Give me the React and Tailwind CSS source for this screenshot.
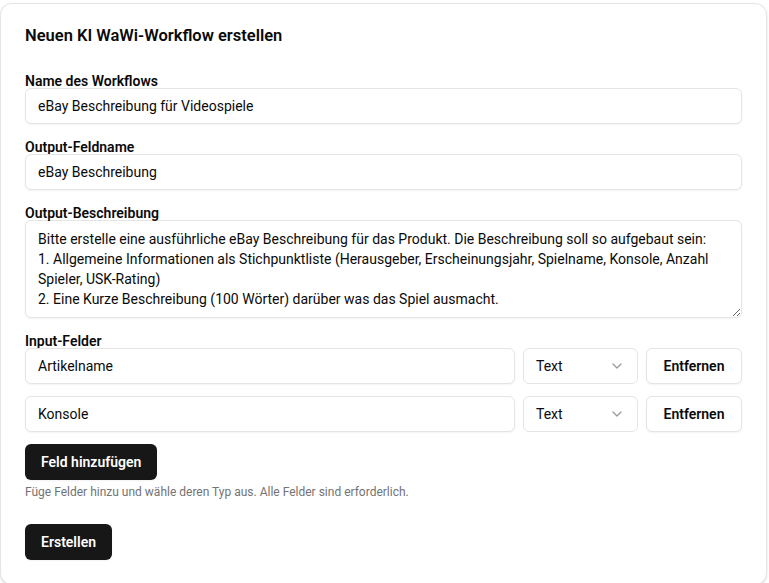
import React from "react";
import { ChevronDown } from "lucide-react";

const desc =
  "Bitte erstelle eine ausführliche eBay Beschreibung für das Produkt. Die Beschreibung soll so aufgebaut sein:\n1. Allgemeine Informationen als Stichpunktliste (Herausgeber, Erscheinungsjahr, Spielname, Konsole, Anzahl Spieler, USK-Rating)\n2. Eine Kurze Beschreibung (100 Wörter) darüber was das Spiel ausmacht.";

function Label({ children }) {
  return <label className="block text-sm font-semibold leading-none text-[#0a0a0a]">{children}</label>;
}

function TextInput({ value }) {
  return (
    <input
      defaultValue={value}
      className="h-9 w-full rounded-md border border-[#e5e5e5] bg-white px-3 text-sm text-[#0a0a0a] shadow-xs outline-none"
    />
  );
}

function FieldRow({ value }) {
  return (
    <div className="flex items-center gap-2">
      <div className="flex-1">
        <TextInput value={value} />
      </div>
      <div className="flex h-9 w-[115px] items-center justify-between rounded-md border border-[#e5e5e5] bg-white px-3 text-sm text-[#0a0a0a]">
        <span>Text</span>
        <ChevronDown size={16} className="text-[#0a0a0a] opacity-40" />
      </div>
      <button className="h-9 w-[96px] rounded-md border border-[#e5e5e5] bg-white text-sm font-semibold text-[#0a0a0a] shadow-xs">
        Entfernen
      </button>
    </div>
  );
}

export default function App() {
  return (
    <div className="min-h-[583px] bg-white pt-[3px] pl-0 pr-[2px] font-['Roboto',sans-serif]">
      <div className="rounded-xl border border-[#e5e5e5] bg-white px-6 pt-6 pb-6 shadow-sm">
        <h2 className="text-[16.5px] font-semibold leading-4 text-[#0a0a0a]">Neuen KI WaWi-Workflow erstellen</h2>
        <div className="mt-[30px] flex flex-col gap-4">
          <div>
            <Label>Name des Workflows</Label>
            <TextInput value="eBay Beschreibung für Videospiele" />
          </div>
          <div>
            <Label>Output-Feldname</Label>
            <TextInput value="eBay Beschreibung" />
          </div>
          <div>
            <Label>Output-Beschreibung</Label>
            <textarea
              defaultValue={desc}
              className="block h-[98px] w-full resize-y rounded-md border border-[#e5e5e5] bg-white px-3 py-2 text-sm leading-5 text-[#0a0a0a] shadow-xs outline-none"
            />
          </div>
          <div>
            <Label>Input-Felder</Label>
            <div className="flex flex-col gap-3">
              <FieldRow value="Artikelname" />
              <FieldRow value="Konsole" />
            </div>
            <button className="mt-3 h-9 rounded-md bg-[#171717] px-4 text-sm font-semibold text-white shadow-xs">
              Feld hinzufügen
            </button>
            <p className="mt-1 text-xs leading-4 text-[#737373]">
              Füge Felder hinzu und wähle deren Typ aus. Alle Felder sind erforderlich.
            </p>
          </div>
        </div>
        <button className="mt-6 h-9 rounded-md bg-[#171717] px-4 text-sm font-semibold text-white shadow-xs">
          Erstellen
        </button>
      </div>
    </div>
  );
}
